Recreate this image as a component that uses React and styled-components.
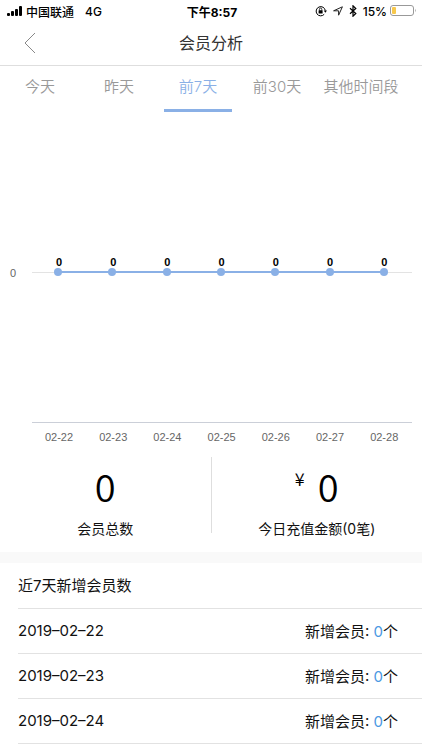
import React, { useState } from "react"
import styled, { createGlobalStyle } from "styled-components"

const GlobalStyle = createGlobalStyle`
  * {
    box-sizing: border-box;
  }

  body {
    margin: 0;
    background: #fff;
    color: #111;
    font-family: Inter, "Noto Sans CJK SC", sans-serif;
  }

  button {
    padding: 0;
    border: 0;
    background: none;
    font: inherit;
    cursor: pointer;
  }
`

const StatusBar = styled.div`
  display: grid;
  grid-template-columns: 1fr auto 1fr;
  align-items: center;
  height: 22px;
  padding: 0 5px 0 7px;
  color: #000;
  font-size: 12px;
  font-weight: 500;
`

const StatusGroup = styled.div`
  display: flex;
  align-items: center;
  gap: ${({ $gap }) => $gap}px;
  justify-content: ${({ $end }) => ($end ? "flex-end" : "flex-start")};
`

const Network = styled.span`
  margin-left: 8px;
`

const Time = styled.time`
  font-weight: 700;
`

const TopBar = styled.header`
  display: grid;
  grid-template-columns: 60px 1fr 60px;
  align-items: start;
  height: 44px;
  border-bottom: 1px solid #dedede;
`

const BackButton = styled.button`
  display: flex;
  align-items: center;
  justify-content: center;
  height: 42px;
`

const Title = styled.h1`
  margin: 0;
  color: #333;
  font-size: 16px;
  font-weight: 400;
  line-height: 42px;
  text-align: center;
`

const Tabs = styled.nav`
  display: flex;
  gap: 11px;
  height: 46px;
  padding: 0 22px 0 6px;
`

const Tab = styled.button`
  flex: ${({ $wide }) => ($wide ? 78 : 68)} 1 0;
  padding-bottom: 2px;
  border-bottom: 3px solid ${({ $active }) => ($active ? "#8ab0e6" : "transparent")};
  color: ${({ $active }) => ($active ? "#8ab0e6" : "#999")};
  font-size: 15px;
  font-weight: 350;
  line-height: 22px;
  white-space: nowrap;
`

const ChartSvg = styled.svg`
  display: block;
  width: 100%;
  height: auto;
  font-family: "Liberation Sans", Arial, sans-serif;
  font-size: 11px;
`

const Stats = styled.section`
  display: flex;
  padding: 11px 0 19px;
`

const Stat = styled.div`
  flex: 1;
  height: 76px;
  text-align: center;

  &:first-child {
    border-right: 1px solid #dedede;
  }
`

const StatValue = styled.div`
  display: flex;
  justify-content: center;
  gap: 13px;
  height: 60px;
  color: #000;
  font-family: "Noto Sans CJK SC", sans-serif;
  font-size: 38px;
  font-weight: 350;
  line-height: 58px;
`

const Currency = styled.span`
  font-size: 18px;
  line-height: 42px;
`

const StatLabel = styled.div`
  font-size: 14px;
  line-height: 24px;
`

const Members = styled.section`
  padding-left: 18px;
  border-top: 11px solid #f9f9f9;
  font-size: 15px;
`

const MembersTitle = styled.h2`
  margin: 0;
  height: 46px;
  border-bottom: 1px solid #e2e2e2;
  font-size: 15px;
  font-weight: 400;
  line-height: 46px;
`

const MemberList = styled.ul`
  margin: 0;
  padding: 0;
  list-style: none;
`

const MemberRow = styled.li`
  display: flex;
  align-items: center;
  justify-content: space-between;
  height: 45px;
  padding: 0 24px 2px 0;
  border-bottom: 1px solid #e2e2e2;
`

const Count = styled.span`
  color: #4a98e2;
`

const SignalIcon = () => (
  <svg width="16" height="10" viewBox="0 0 16 10" aria-hidden="true">
    <rect x="0" y="7" width="3" height="3" rx="1" />
    <rect x="4" y="5" width="3" height="5" rx="1" />
    <rect x="8" y="3" width="3" height="7" rx="1" />
    <rect x="12" y="0" width="3" height="10" rx="1" />
  </svg>
)

const RotationLockIcon = () => (
  <svg width="12" height="12" viewBox="0 0 12 12" aria-hidden="true">
    <path d="M9.2 9.3A4.6 4.6 0 1 1 10.3 5.5" fill="none" stroke="#000" />
    <path d="M8.7 5.5h3.3l-1.6 2.2z" />
    <rect x="3.6" y="5.2" width="4" height="3.2" rx="0.5" />
    <path d="M4.4 5.5V4.3a1.2 1.2 0 0 1 2.4 0v1.2" fill="none" stroke="#000" strokeWidth="0.8" />
  </svg>
)

const LocationIcon = () => (
  <svg width="10" height="10" viewBox="0 0 10 10" aria-hidden="true">
    <path d="M9.4 0.8 5.6 9.2V4.8H0.6z" fill="none" stroke="#222" strokeLinejoin="round" />
  </svg>
)

const BluetoothIcon = () => (
  <svg width="8" height="12" viewBox="0 0 8 12" aria-hidden="true">
    <path d="M1 3.3 6.8 8.5 4 11.2V0.8l2.8 2.7L1 8.7" fill="none" stroke="#000" strokeWidth="1.2" />
  </svg>
)

const BatteryIcon = () => (
  <svg width="27" height="12" viewBox="0 0 27 12" aria-hidden="true">
    <rect x="0.5" y="0.5" width="23" height="10" rx="2.5" fill="#fff" stroke="#999" />
    <rect x="2" y="2" width="4" height="7" rx="1" fill="#f7c84c" />
    <path d="M25 3.8q1.5 1.7 0 3.4z" fill="#999" />
  </svg>
)

const BackIcon = () => (
  <svg width="12" height="22" viewBox="0 0 12 22" aria-hidden="true">
    <path d="M11 1 1 11l10 10" fill="none" stroke="#888" />
  </svg>
)

const tabs = ["今天", "昨天", "前7天", "前30天", "其他时间段"]

const points = [
  { day: "02-22", x: 58 },
  { day: "02-23", x: 112 },
  { day: "02-24", x: 167 },
  { day: "02-25", x: 221 },
  { day: "02-26", x: 275 },
  { day: "02-27", x: 330 },
  { day: "02-28", x: 384 },
]

const members = ["2019–02–22", "2019–02–23", "2019–02–24"]

const Chart = () => (
  <ChartSvg viewBox="0 0 422 334" role="img" aria-label="会员分析">
    <path d="M32 160.500H412" stroke="#e3e3e3" />
    <path d="M32 310.500H412" stroke="#cbcfd8" />
    <text x="10" y="165" fill="#666">
      0
    </text>
    <path d="M58 160H384" stroke="#8ab0e6" strokeWidth="2" />
    {points.map(({ day, x }, i) => (
      <g key={day} textAnchor="middle">
        <circle cx={x} cy="160" r="4" fill="#8ab0e6" />
        <text x={59 + i * 54.2} y="154" fill="#000" fontWeight="700">
          0
        </text>
        <text x={59 + i * 54.2} y="329" fill="#666">
          {day}
        </text>
      </g>
    ))}
  </ChartSvg>
)

const App = () => {
  const [active, setActive] = useState("前7天")

  return (
    <>
      <GlobalStyle />
      <StatusBar>
        <StatusGroup $gap={3}>
          <SignalIcon />
          <span>中国联通</span>
          <Network>4G</Network>
        </StatusGroup>
        <Time>下午8:57</Time>
        <StatusGroup $gap={6} $end>
          <RotationLockIcon />
          <LocationIcon />
          <BluetoothIcon />
          <StatusGroup $gap={3}>
            <span>15%</span>
            <BatteryIcon />
          </StatusGroup>
        </StatusGroup>
      </StatusBar>
      <TopBar>
        <BackButton type="button" aria-label="返回">
          <BackIcon />
        </BackButton>
        <Title>会员分析</Title>
      </TopBar>
      <Tabs>
        {tabs.map(tab => (
          <Tab
            key={tab}
            type="button"
            $wide={tab.length > 4}
            $active={tab === active}
            onClick={() => setActive(tab)}
          >
            {tab}
          </Tab>
        ))}
      </Tabs>
      <main>
        <Chart />
        <Stats>
          <Stat>
            <StatValue>0</StatValue>
            <StatLabel>会员总数</StatLabel>
          </Stat>
          <Stat>
            <StatValue>
              <Currency>¥</Currency>0
            </StatValue>
            <StatLabel>今日充值金额(0笔)</StatLabel>
          </Stat>
        </Stats>
        <Members>
          <MembersTitle>近7天新增会员数</MembersTitle>
          <MemberList>
            {members.map(date => (
              <MemberRow key={date}>
                <time>{date}</time>
                <span>
                  新增会员: <Count>0</Count>个
                </span>
              </MemberRow>
            ))}
          </MemberList>
        </Members>
      </main>
    </>
  )
}

export default App
